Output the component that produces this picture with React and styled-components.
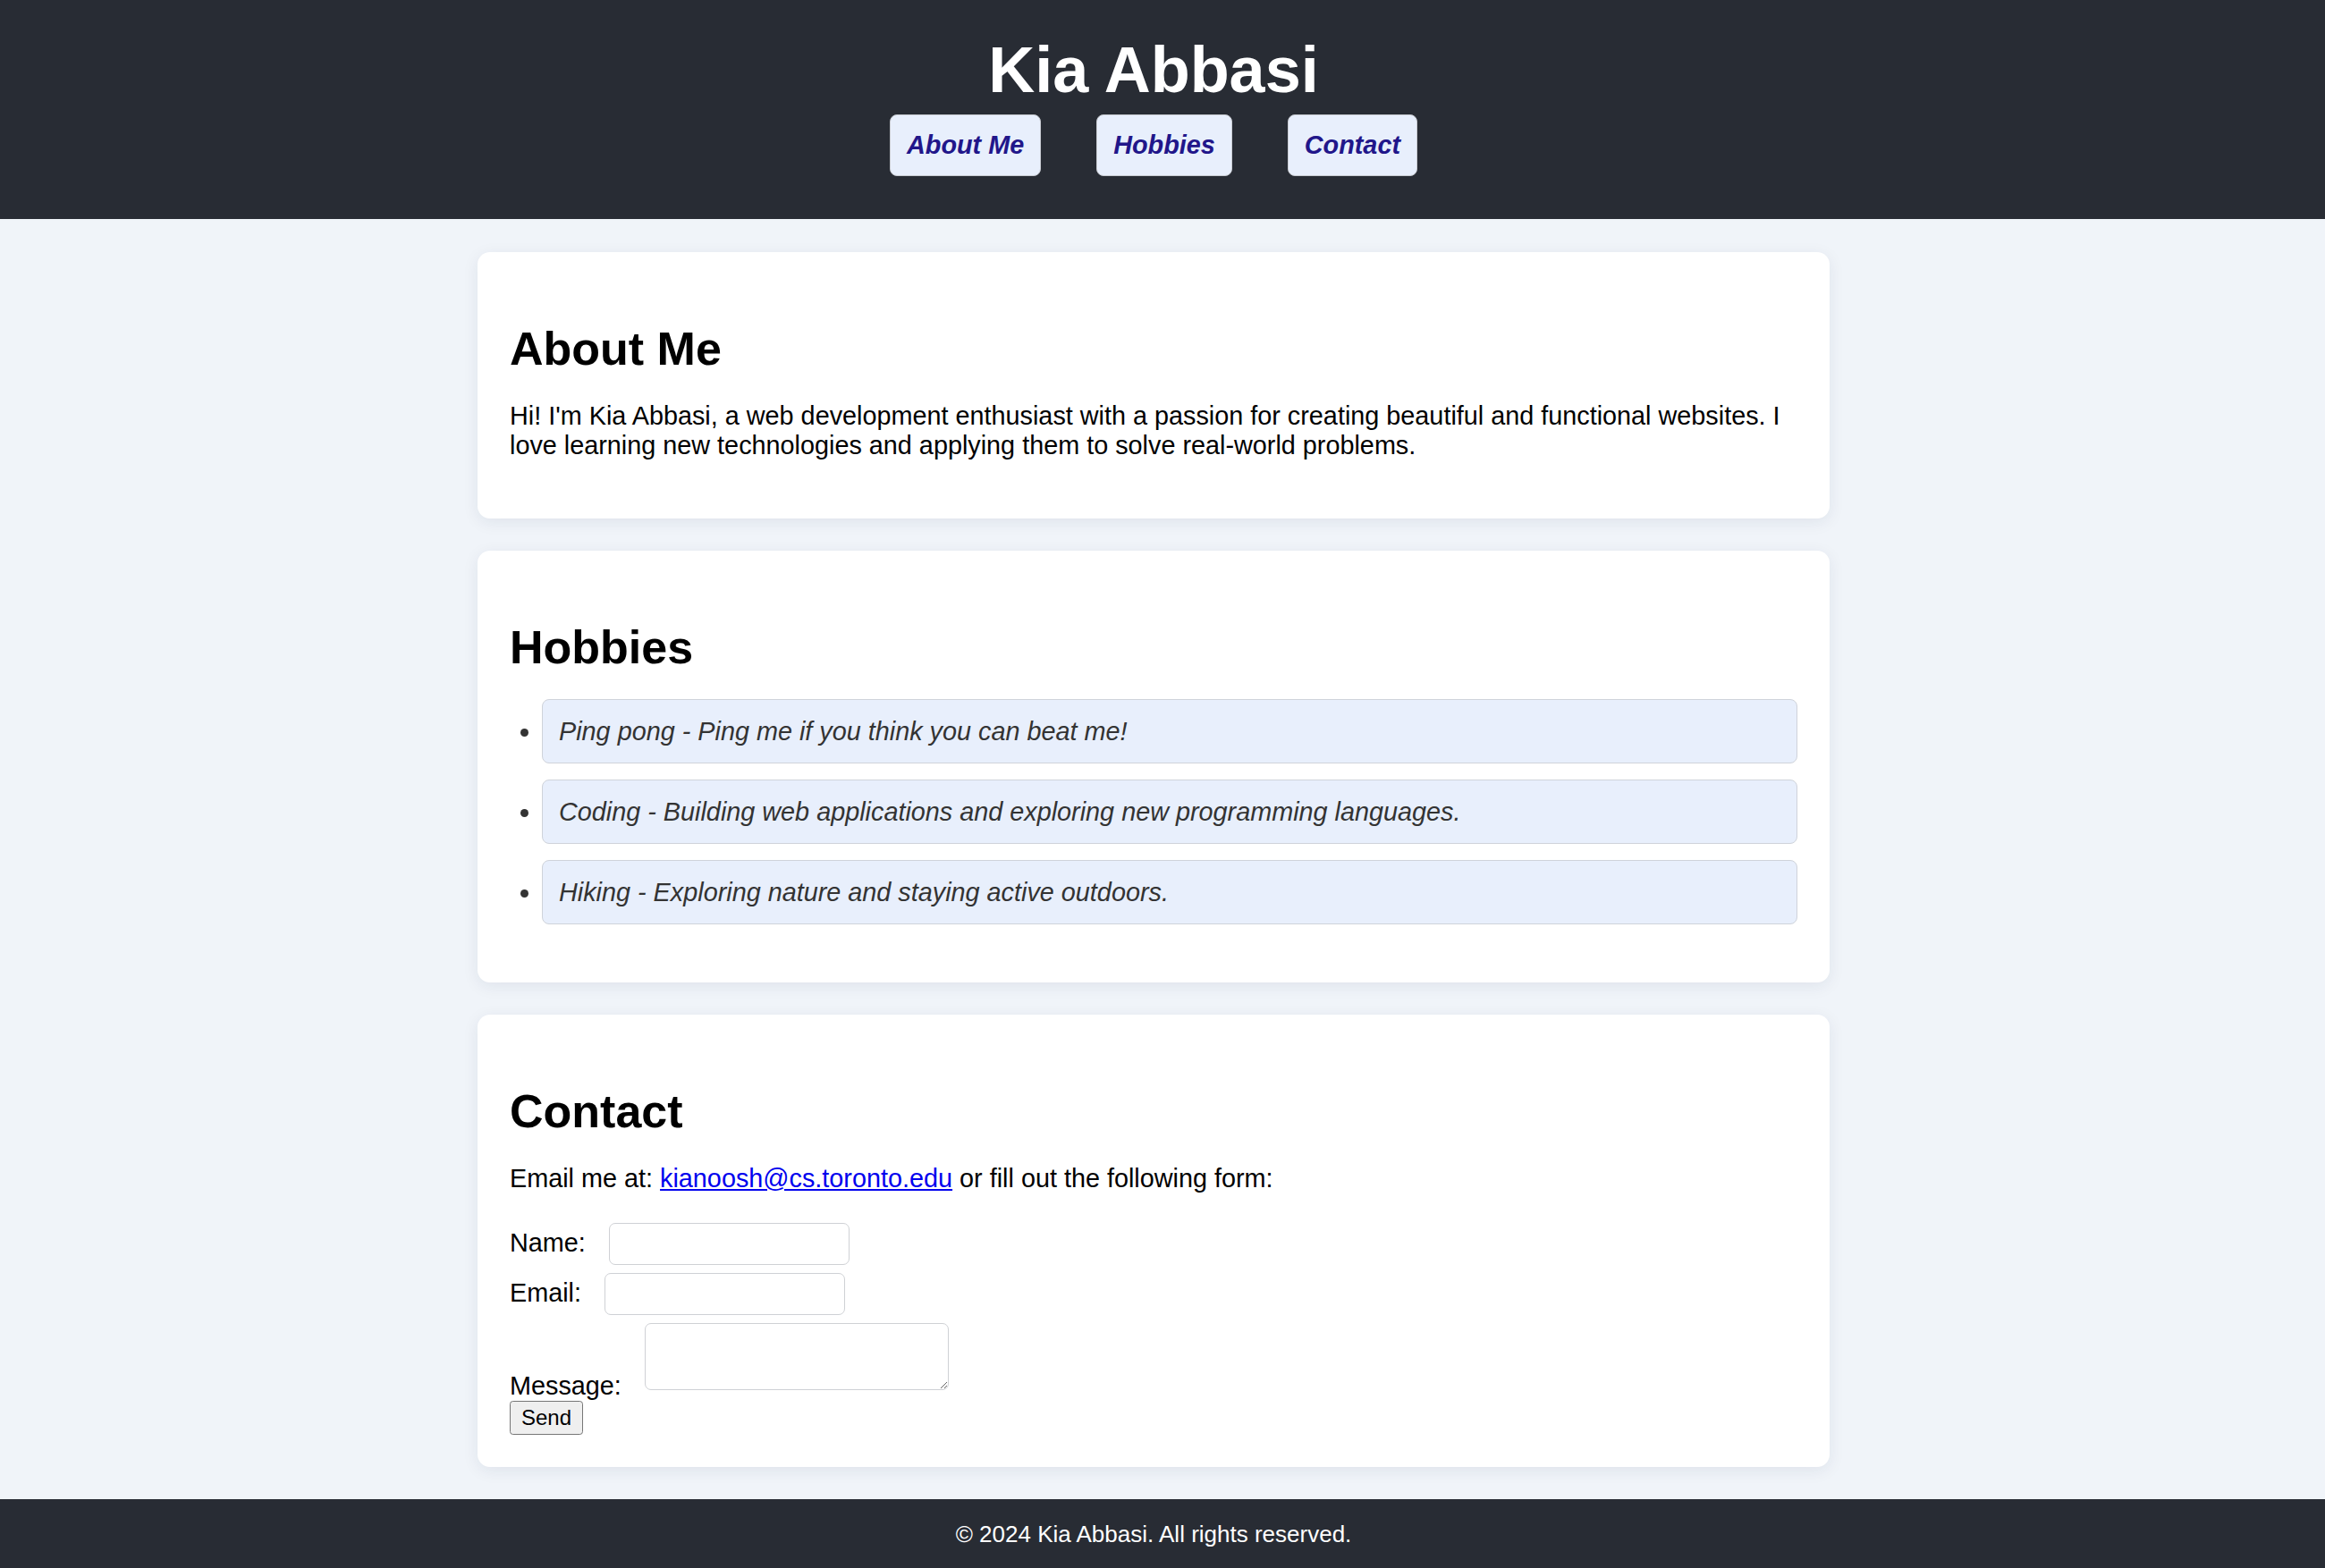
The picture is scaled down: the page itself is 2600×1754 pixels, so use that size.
import React from "react";
import styled, { createGlobalStyle } from "styled-components";

const GlobalStyle = createGlobalStyle`
  html, body {
    margin: 0;
    padding: 0;
    background-color: #f0f4f9;
    font-family: "Liberation Sans", Arial, sans-serif;
    font-size: 28.8px;
    color: #000;
  }
`;

const hobbies = [
  "Ping pong - Ping me if you think you can beat me!",
  "Coding - Building web applications and exploring new programming languages.",
  "Hiking - Exploring nature and staying active outdoors.",
];

const navLinks = ["About Me", "Hobbies", "Contact"];

const App = () => {
  return (
    <Page>
      <GlobalStyle />
      <Header>
        <Title>Kia Abbasi</Title>
        <Nav>
          {navLinks.map((item) => (
            <NavButton key={item} href={`#${item}`}>
              {item}
            </NavButton>
          ))}
        </Nav>
      </Header>

      <Main>
        <Card>
          <h2>About Me</h2>
          <p>
            Hi! I'm Kia Abbasi, a web development enthusiast with a passion for
            creating beautiful and functional websites. I love learning new
            technologies and applying them to solve real-world problems.
          </p>
        </Card>

        <Card>
          <h2>Hobbies</h2>
          <HobbyList>
            {hobbies.map((item) => (
              <li key={item}>{item}</li>
            ))}
          </HobbyList>
        </Card>

        <Card>
          <h2>Contact</h2>
          <p>
            Email me at:{" "}
            <a href="mailto:kianoosh@cs.toronto.edu">kianoosh@cs.toronto.edu</a>{" "}
            or fill out the following form:
          </p>
          <Form onSubmit={(e) => e.preventDefault()}>
            <FormRow>
              <label htmlFor="name">Name:</label>
              <TextInput id="name" type="text" />
            </FormRow>
            <FormRow>
              <label htmlFor="email">Email:</label>
              <TextInput id="email" type="email" />
            </FormRow>
            <FormRow>
              <label htmlFor="message">Message:</label>
              <MessageBox id="message" />
            </FormRow>
            <SendButton type="submit">Send</SendButton>
          </Form>
        </Card>
      </Main>

      <Footer>
        <p>© 2024 Kia Abbasi. All rights reserved.</p>
      </Footer>
    </Page>
  );
};

export default App;

const Page = styled.div`
  display: flex;
  flex-direction: column;
  min-height: 1754px;
`;

const Header = styled.header`
  display: flex;
  flex-direction: column;
  align-items: center;
  background-color: #282c34;
  padding: 37px 20px 48px 0;
`;

const Title = styled.h1`
  margin: 0;
  color: #fff;
  font-size: 72px;
  font-weight: bold;
  line-height: normal;
`;

const Nav = styled.nav`
  display: flex;
  gap: 62px;
  margin-top: 9px;
`;

const NavButton = styled.a`
  display: block;
  padding: 17px 18px;
  background-color: #e8effc;
  border: 1px solid #c9ccd2;
  border-radius: 8px;
  color: #21168a;
  font-size: 28.8px;
  font-weight: bold;
  font-style: italic;
  text-decoration: none;
`;

const Main = styled.main`
  flex: 1;
  display: flex;
  flex-direction: column;
  align-items: center;
  gap: 36px;
  padding: 37px 20px 36px 0;
`;

const Card = styled.section`
  box-sizing: border-box;
  width: 1512px;
  padding: 36px;
  background-color: #fff;
  border-radius: 14px;
  box-shadow: 0 4px 18px rgba(20, 40, 80, 0.08);

  h2 {
    margin: 42px 0 0;
    font-size: 52px;
    font-weight: bold;
    line-height: normal;
  }
  p {
    margin: 28.8px 0;
    line-height: normal;
  }
  a {
    color: #0000ee;
  }
`;

const HobbyList = styled.ul`
  margin: 28.8px 0;
  padding-left: 36px;
  color: #333;

  li {
    margin-bottom: 18px;
    padding: 18.5px 18px;
    background-color: #e8effc;
    border: 1px solid #cfd3da;
    border-radius: 8px;
    font-style: italic;
    line-height: normal;
  }
`;

const Form = styled.form`
  margin: 0;
`;

const FormRow = styled.div`
  line-height: normal;

  label {
    margin-right: 26px;
  }
`;

const TextInput = styled.input`
  box-sizing: border-box;
  width: 269px;
  height: 47px;
  margin: 4.5px 0;
  padding: 9px;
  border: 1px solid #cfd1d5;
  border-radius: 7px;
  font-family: "Liberation Sans", Arial, sans-serif;
  font-size: 24px;
  vertical-align: baseline;
`;

const MessageBox = styled.textarea`
  box-sizing: border-box;
  width: 340px;
  height: 75px;
  margin: 4.5px 0;
  padding: 9px;
  border: 1px solid #cfd1d5;
  border-radius: 7px;
  font-family: "Liberation Sans", Arial, sans-serif;
  font-size: 24px;
  vertical-align: baseline;
`;

const SendButton = styled.button`
  display: block;
  height: 38px;
  padding: 0 12px;
  background-color: #efefef;
  border: 1.8px solid #767676;
  border-radius: 3.6px;
  font-family: "Liberation Sans", Arial, sans-serif;
  font-size: 24px;
  color: #000;
`;

const Footer = styled.footer`
  background-color: #282c34;
  padding-right: 20px;
  text-align: center;

  p {
    margin: 0;
    padding: 24.5px 0;
    color: #fff;
    font-size: 26px;
    line-height: normal;
  }
`;
